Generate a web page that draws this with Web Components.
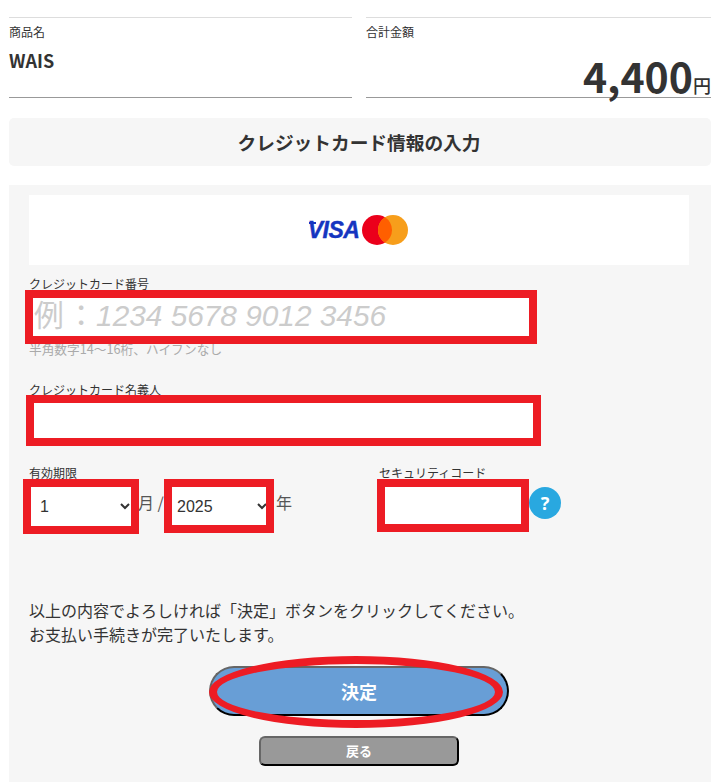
<!DOCTYPE html>
<html lang="ja">
<head>
<meta charset="utf-8">
<title>クレジットカード情報の入力</title>
<style>
    html, body { margin: 0; height: 782px; overflow: hidden; background: #fff; }
    body { font-family: "Noto Sans CJK JP", "Noto Sans", sans-serif; color: #333; }
</style>
</head>
<body>
<pay-page>
    <order-summary>
        <summary-cell label="商品名"><span class="name">WAIS</span></summary-cell>
        <summary-cell label="合計金額" price="4,400"></summary-cell>
    </order-summary>
    <section-title>クレジットカード情報の入力</section-title>
    <pay-panel>
        <card-logos></card-logos>
        <form-field label="クレジットカード番号" hint="半角数字14～16桁、ハイフンなし" mode="number"></form-field>
        <form-field label="クレジットカード名義人" mode="name"></form-field>
        <expiry-row></expiry-row>
        <confirm-note>以上の内容でよろしければ「決定」ボタンをクリックしてください。<br>お支払い手続きが完了いたします。</confirm-note>
        <action-button kind="main" marked>決定</action-button>
        <action-button kind="back">戻る</action-button>
    </pay-panel>
</pay-page>

<script>
(() => {
    // red marker drawn over a control
    class RedMark extends HTMLElement {
        constructor () {
            super()
            this.attachShadow({ mode: 'open' })
            this.shadowRoot.innerHTML = `
                <style>
                    :host {
                        display: block;
                        position: absolute;
                        box-sizing: border-box;
                        border: 8px solid #ed1c24;
                        pointer-events: none;
                    }
                    :host([oval]) { border-radius: 50%; }
                </style>`
        }
    }

    class PayPage extends HTMLElement {
        constructor () {
            super()
            this.attachShadow({ mode: 'open' })
            this.shadowRoot.innerHTML = `
                <style>
                    :host { display: block; padding: 17px 14px 0 9px; }
                </style>
                <slot></slot>`
        }
    }

    class OrderSummary extends HTMLElement {
        constructor () {
            super()
            this.attachShadow({ mode: 'open' })
            this.shadowRoot.innerHTML = `
                <style>
                    :host {
                        display: grid;
                        grid-template-columns: 343px 345px;
                        column-gap: 14px;
                        margin-bottom: 20px;
                    }
                </style>
                <slot></slot>`
        }
    }

    class SummaryCell extends HTMLElement {
        constructor () {
            super()
            this.attachShadow({ mode: 'open' })
            this.shadowRoot.innerHTML = `
                <style>
                    :host {
                        display: block;
                        box-sizing: border-box;
                        height: 81px;
                        border-top: 1px solid #ddd;
                        border-bottom: 1px solid #999;
                    }
                    .label { font-size: 12px; line-height: 18px; margin-top: 5px; }
                    .value { font-size: 18px; font-weight: 700; line-height: 26px; margin-top: 6px; }
                    ::slotted(.name) { font-weight: 700; }
                    .price {
                        display: flex;
                        justify-content: flex-end;
                        align-items: baseline;
                        height: 56px;
                        margin-top: 6px;
                        line-height: 56px;
                        font-size: 41px;
                        font-weight: 700;
                    }
                    .price small { font-size: 18px; font-weight: 500; }
                </style>
                <div class="label"></div>
                <div class="value"><slot></slot></div>`
            this.shadowRoot.querySelector('.label').textContent = this.getAttribute('label')
            const price = this.getAttribute('price')
            if (price) {
                const box = this.shadowRoot.querySelector('.value')
                box.className = 'price'
                box.innerHTML = `<span>${price}</span><small>円</small>`
            }
        }
    }

    class SectionTitle extends HTMLElement {
        constructor () {
            super()
            this.attachShadow({ mode: 'open' })
            this.shadowRoot.innerHTML = `
                <style>
                    :host {
                        display: block;
                        box-sizing: border-box;
                        height: 48px;
                        margin-bottom: 19px;
                        padding-right: 2px;
                        border-radius: 5px;
                        background: #f6f6f6;
                        text-align: center;
                        font-size: 18.7px;
                        font-weight: 700;
                        line-height: 48px;
                    }
                </style>
                <slot></slot>`
        }
    }

    class PayPanel extends HTMLElement {
        constructor () {
            super()
            this.attachShadow({ mode: 'open' })
            this.shadowRoot.innerHTML = `
                <style>
                    :host {
                        display: block;
                        height: 600px;
                        padding: 10px 22px 0 20px;
                        background: #f6f6f6;
                    }
                </style>
                <slot></slot>`
        }
    }

    class CardLogos extends HTMLElement {
        constructor () {
            super()
            this.attachShadow({ mode: 'open' })
            this.shadowRoot.innerHTML = `
                <style>
                    :host {
                        display: flex;
                        justify-content: center;
                        align-items: center;
                        gap: 3px;
                        box-sizing: border-box;
                        height: 70px;
                        padding-right: 2px;
                        background: #fff;
                    }
                    .visa {
                        position: relative;
                        font: italic 700 23px/30px "Liberation Sans", sans-serif;
                        letter-spacing: -0.5px;
                        -webkit-text-stroke: 0.4px #1535c0;
                        color: #1535c0;
                    }
                    .visa::before {
                        content: "";
                        position: absolute;
                        left: 1px;
                        top: 7px;
                        width: 7px;
                        height: 2px;
                        background: #1535c0;
                    }
                    svg { display: block; }
                </style>
                <span class="visa">VISA</span>
                <svg width="46" height="30" viewBox="0 0 46 30">
                    <circle cx="15" cy="15" r="15" fill="#eb001b"/>
                    <circle cx="31" cy="15" r="15" fill="#f79e1b"/>
                    <path d="M23 2.3a15 15 0 0 1 0 25.4a15 15 0 0 1 0-25.4z" fill="#ff5f00"/>
                </svg>`
        }
    }

    class FormField extends HTMLElement {
        constructor () {
            super()
            this.attachShadow({ mode: 'open' })
            const mode = this.getAttribute('mode')
            const hint = this.getAttribute('hint')
            this.shadowRoot.innerHTML = `
                <style>
                    :host { display: block; }
                    :host([mode=number]) { height: 106px; margin-top: 10px; }
                    :host([mode=name]) { height: 83px; }
                    .label { font-size: 12px; line-height: 18px; }
                    .box { position: relative; height: 38px; margin-top: 5px; }
                    :host([mode=name]) .box { height: 35px; margin-top: 4px; }
                    input {
                        display: block;
                        box-sizing: border-box;
                        width: 500px;
                        height: 100%;
                        padding: 0 5px 2px;
                        border: 0;
                        background: #fff;
                        font: 29.8px "Liberation Sans", "Noto Sans CJK JP", sans-serif;
                        font-synthesis: none;
                    }
                    :host([mode=name]) input { width: 504px; }
                    input::placeholder { color: #ccc; font-style: italic; opacity: 1; }
                    red-mark { left: -4px; top: -8px; width: 512px; height: 54px; }
                    :host([mode=name]) red-mark { left: -3px; width: 515px; height: 51px; }
                    .hint { font-size: 12.7px; line-height: 18px; color: #aaa; margin-top: 4px; }
                </style>
                <div class="label">${this.getAttribute('label')}</div>
                <div class="box">
                    <input type="text" placeholder="${mode === 'number' ? '例\u200a：1234 5678 9012 3456' : ''}">
                    <red-mark></red-mark>
                </div>
                ${hint ? `<div class="hint">${hint}</div>` : ''}`
        }
    }

    class ExpiryRow extends HTMLElement {
        constructor () {
            super()
            this.attachShadow({ mode: 'open' })
            this.shadowRoot.innerHTML = `
                <style>
                    :host {
                        display: grid;
                        grid-template-columns: 350px 1fr;
                        height: 134px;
                        font-size: 16px;
                    }
                    .label { font-size: 12px; line-height: 18px; }
                    .line { display: flex; align-items: center; height: 39px; margin-top: 5px; }
                    .box { position: relative; height: 100%; }
                    select {
                        display: block;
                        box-sizing: border-box;
                        height: 100%;
                        border: 0;
                        background: #fff;
                        color: #333;
                        font: 16px "Liberation Sans", sans-serif;
                    }
                    .month select { width: 104px; padding: 0 0 0 7px; }
                    .year select { width: 98px; padding: 0 0 0 1px; }
                    .month red-mark { left: -6px; top: -8px; width: 116px; height: 55px; }
                    .year red-mark { left: -8px; top: -8px; width: 110px; height: 54px; }
                    .sep { font-size: 16px; color: #555; margin-top: -9px; }
                    .slash { width: 34px; margin-left: 5px; white-space: nowrap; }
                    .end { margin-left: 6px; }
                    input {
                        display: block;
                        box-sizing: border-box;
                        width: 136px;
                        height: 37px;
                        border: 0;
                        background: #fff;
                    }
                    .code { position: relative; height: 37px; margin-left: 6px; }
                    .code red-mark { left: -8px; top: -8px; width: 152px; height: 53px; }
                    .help {
                        width: 32px;
                        height: 32px;
                        margin-left: 8px;
                        border-radius: 50%;
                        background: #29a8e0;
                        color: #fff;
                        text-align: center;
                        font: 700 18px/32px "Noto Sans", sans-serif;
                    }
                    .col + .col .line { align-items: flex-start; }
                </style>
                <div class="col">
                    <div class="label">有効期限</div>
                    <div class="line">
                        <div class="box month">
                            <select><option>1</option><option>2</option><option>12</option></select>
                            <red-mark></red-mark>
                        </div>
                        <span class="sep slash">月 /</span>
                        <div class="box year">
                            <select><option>2025</option><option>2026</option></select>
                            <red-mark></red-mark>
                        </div>
                        <span class="sep end">年</span>
                    </div>
                </div>
                <div class="col">
                    <div class="label">セキュリティコード</div>
                    <div class="line">
                        <div class="code"><input type="text"><red-mark></red-mark></div>
                        <div class="help">?</div>
                    </div>
                </div>`
        }
    }

    class ConfirmNote extends HTMLElement {
        constructor () {
            super()
            this.attachShadow({ mode: 'open' })
            this.shadowRoot.innerHTML = `
                <style>
                    :host {
                        display: block;
                        font-size: 16px;
                        line-height: 24px;
                        margin-bottom: 20px;
                    }
                </style>
                <slot></slot>`
        }
    }

    class ActionButton extends HTMLElement {
        constructor () {
            super()
            this.attachShadow({ mode: 'open' })
            this.shadowRoot.innerHTML = `
                <style>
                    :host { display: block; position: relative; box-sizing: border-box; margin: 0 auto; color: #fff; font-weight: 700; text-align: center; border: 2px solid; border-color: #666 #000 #000 #666; }
                    :host([kind=main]) { width: 300px; height: 50px; line-height: 46px; border-radius: 25px; background: #689ed6; font-size: 18px; margin-bottom: 20px; }
                    :host([kind=back]) { width: 200px; height: 30px; line-height: 26px; border-radius: 6px; background: #999; font-size: 13px; }
                    red-mark { left: -2px; top: -12px; width: 294px; height: 72px; }
                </style>
                <slot></slot>
                ${this.hasAttribute('marked') ? '<red-mark oval></red-mark>' : ''}`
        }
    }

    // children first so the marks are ready when parents render
    customElements.define('red-mark', RedMark)
    customElements.define('pay-page', PayPage)
    customElements.define('order-summary', OrderSummary)
    customElements.define('summary-cell', SummaryCell)
    customElements.define('section-title', SectionTitle)
    customElements.define('pay-panel', PayPanel)
    customElements.define('card-logos', CardLogos)
    customElements.define('form-field', FormField)
    customElements.define('expiry-row', ExpiryRow)
    customElements.define('confirm-note', ConfirmNote)
    customElements.define('action-button', ActionButton)
})()
</script>
</body>
</html>
